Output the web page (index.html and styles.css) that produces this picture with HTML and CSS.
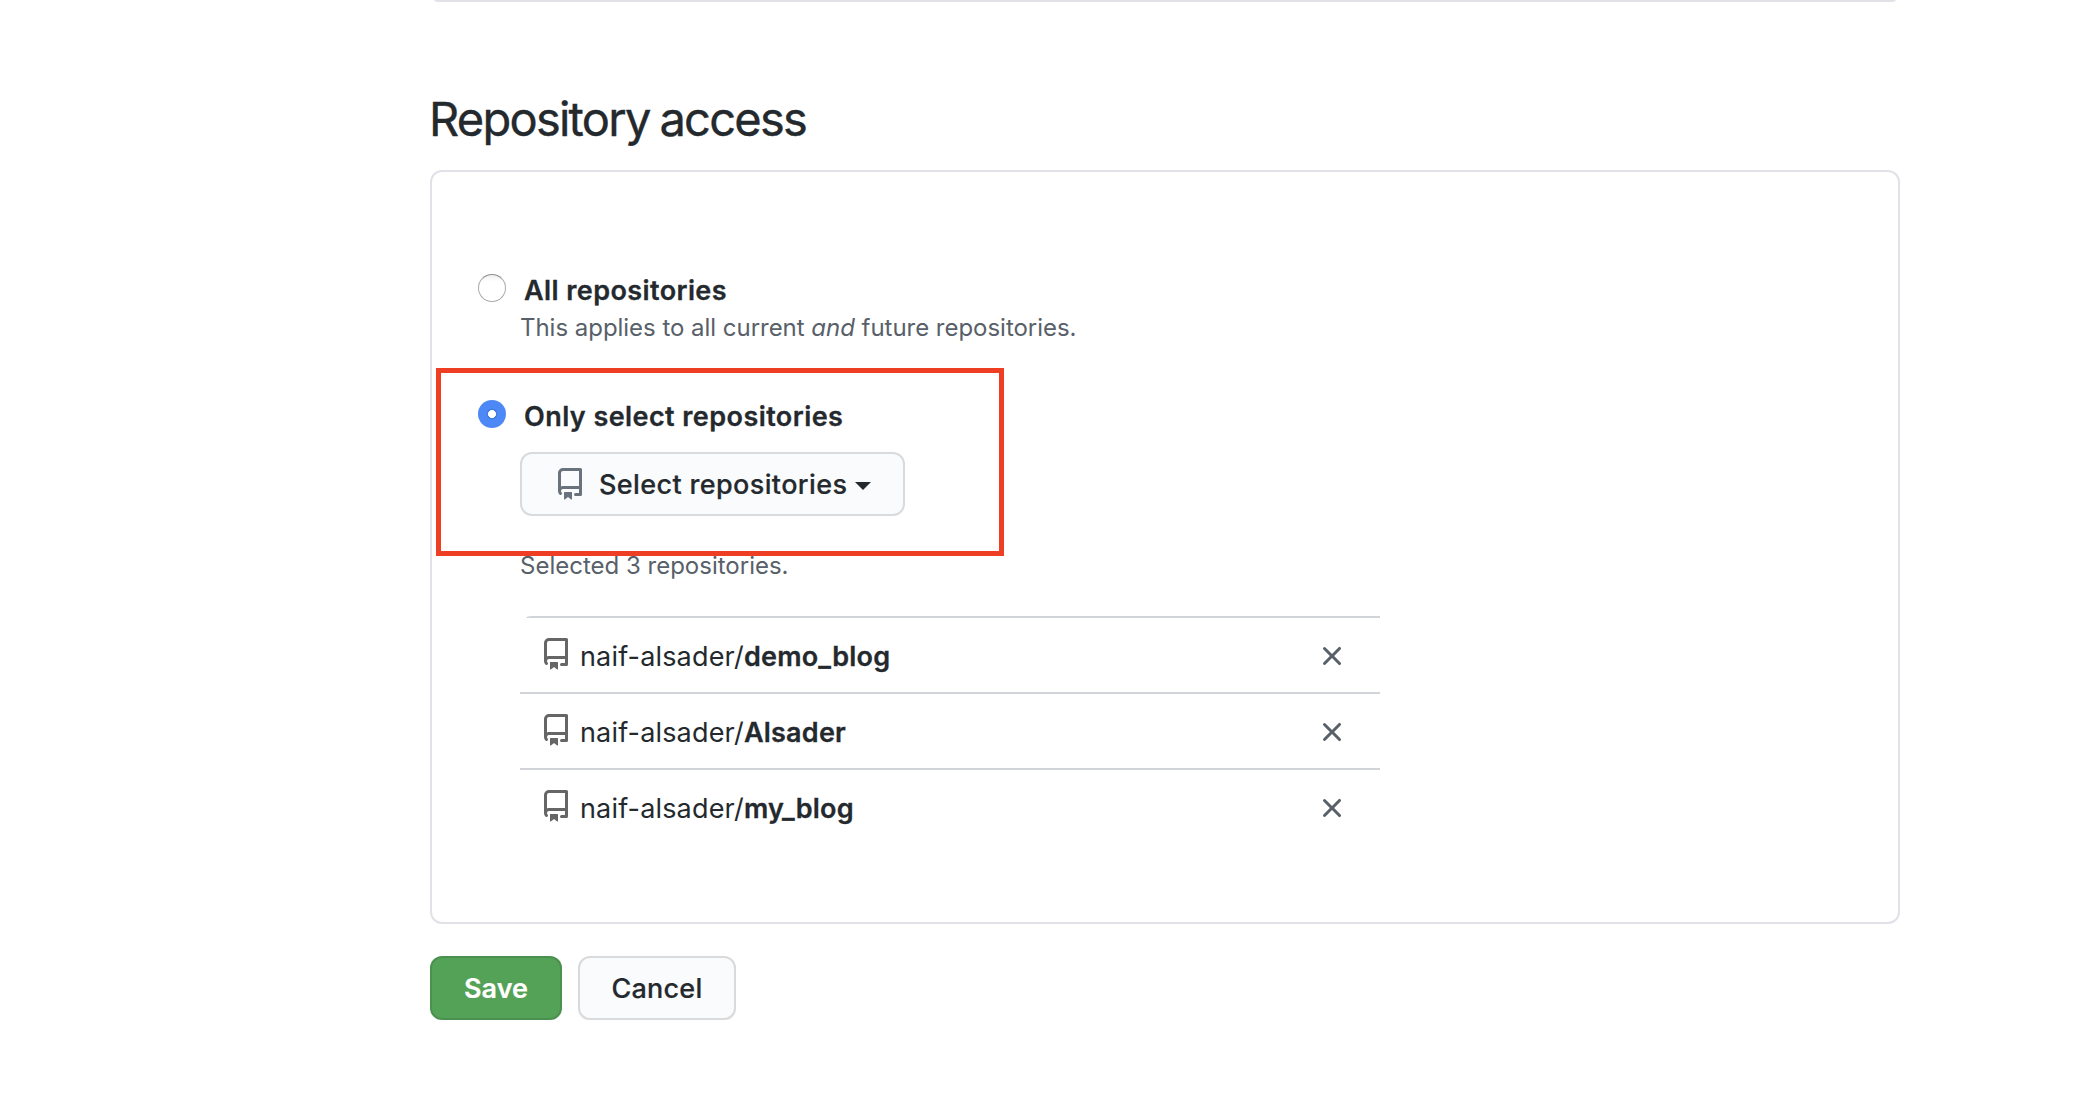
FILE: index.html
```html
<!DOCTYPE html>
<html lang="en">
<head>
<meta charset="utf-8">
<title>Repository access</title>
<link rel="stylesheet" href="styles.css">
</head>
<body>
<svg class="sprite" aria-hidden="true">
  <symbol id="repo" viewBox="0 0 16 16"><path fill-rule="evenodd" d="M2 2.5A2.5 2.5 0 014.5 0h8.75a.75.75 0 01.75.75v12.5a.75.75 0 01-.75.75h-2.5a.75.75 0 110-1.5h1.75v-2h-8a1 1 0 00-.714 1.7.75.75 0 01-1.072 1.05A2.495 2.495 0 012 11.5v-9zm10.5-1V9h-8c-.356 0-.694.074-1 .208V2.5a1 1 0 011-1h8zM5 12.25v3.25a.25.25 0 00.4.2l1.45-1.087a.25.25 0 01.3 0L8.6 15.7a.25.25 0 00.4-.2v-3.25a.25.25 0 00-.25-.25h-3.5a.25.25 0 00-.25.25z"/></symbol>
  <symbol id="x" viewBox="0 0 16 16"><path fill-rule="evenodd" d="M3.72 3.72a.75.75 0 011.06 0L8 6.94l3.22-3.22a.75.75 0 111.06 1.06L9.06 8l3.22 3.22a.75.75 0 11-1.06 1.06L8 9.06l-3.22 3.22a.75.75 0 01-1.06-1.06L6.94 8 3.72 4.78a.75.75 0 010-1.06z"/></symbol>
</svg>
<main class="container">
  <div class="previous-box"></div>
  <h2 class="title">Repository access</h2>
  <section class="box">
    <div class="highlight"></div>
    <label class="option"><span class="radio"></span>All repositories</label>
    <p class="note">This applies to all current <em>and</em> future repositories.</p>
    <label class="option option-select"><span class="radio radio-checked"></span>Only select repositories</label>
    <button class="btn btn-select"><svg class="icon"><use href="#repo"/></svg><span class="btn-text">Select repositories</span><span class="caret"></span></button>
    <p class="note note-selected">Selected 3 repositories.</p>
    <ul class="repos">
      <li class="repo"><svg class="icon repo-icon"><use href="#repo"/></svg><span class="name">naif-alsader/<b>demo_blog</b></span><svg class="icon remove"><use href="#x"/></svg></li>
      <li class="repo"><svg class="icon repo-icon"><use href="#repo"/></svg><span class="name">naif-alsader/<b>Alsader</b></span><svg class="icon remove"><use href="#x"/></svg></li>
      <li class="repo"><svg class="icon repo-icon"><use href="#repo"/></svg><span class="name">naif-alsader/<b>my_blog</b></span><svg class="icon remove"><use href="#x"/></svg></li>
    </ul>
  </section>
  <div class="actions">
    <button class="btn btn-primary">Save</button>
    <button class="btn btn-cancel">Cancel</button>
  </div>
</main>
</body>
</html>
```
FILE: styles.css
```css
* { box-sizing: border-box; }
body {
  margin: 0;
  background: #fff;
  color: #24292e;
  font-family: Inter, "Liberation Sans", sans-serif;
  font-size: 27px;
}
.sprite { display: none; }
.container { width: 1470px; margin-left: 430px; }
.previous-box {
  height: 2px;
  margin: 0 4px;
  background: #e1e1e8;
  border-radius: 0 0 6px 6px / 0 0 2px 2px;
}
.title {
  margin: 87px 0 21px -1px;
  font-size: 47px;
  font-weight: 400;
  line-height: 60px;
  letter-spacing: -1.75px;
  word-spacing: -1.6px;
  -webkit-text-stroke: 0.4px #24292e;
}
.box {
  position: relative;
  height: 754px;
  padding: 100px 46px 0;
  border: 2px solid #e1e1e8;
  border-radius: 12px;
}
.highlight {
  position: absolute;
  left: 4px;
  top: 196px;
  width: 568px;
  height: 188px;
  border: 5px solid #ee3f24;
  z-index: 1;
}
.option {
  display: flex;
  align-items: flex-start;
  gap: 18px;
  line-height: 38px;
  font-weight: 600;
  letter-spacing: 0.41px;
  -webkit-text-stroke: 0.3px #24292e;
}
.option-select { margin-top: 52px; letter-spacing: 0.43px; }
.radio {
  width: 28px;
  height: 28px;
  margin-top: 2px;
  border: 1px solid #aaa;
  border-top-color: #8f8f8f;
  border-radius: 50%;
  background: linear-gradient(#f0f0f0, #fff 25%);
}
.radio-checked {
  border: 0;
  background: radial-gradient(circle, #fff 3.7px, #3c78dc 4.3px, #4d89f6 6px);
}
.note {
  margin: 0 0 0 42px;
  color: #586069;
  font-size: 24px;
  line-height: 36px;
  letter-spacing: -0.03px;
}
.note-selected { margin-top: 32px; letter-spacing: 0; }
.icon { width: 32px; height: 32px; flex: none; fill: #6a737d; }
.btn {
  display: flex;
  align-items: center;
  justify-content: center;
  height: 64px;
  padding: 2px 0 0;
  border: 2px solid #d9dadc;
  border-radius: 12px;
  background: #fafbfc;
  box-shadow: 0 2px 0 rgba(27, 31, 35, 0.03);
  color: #24292e;
  font: 500 27px/58px Inter, "Liberation Sans", sans-serif;
  -webkit-text-stroke: 0.2px currentColor;
}
.btn-select {
  justify-content: flex-start;
  width: 385px;
  margin: 16px 0 0 42px;
  padding: 0 0 0 32px;
  box-shadow: none;
  letter-spacing: 0.37px;
}
.btn-text { margin-left: 13px; padding-top: 2px; }
.caret {
  margin: 4px 0 0 8px;
  border: 8px solid transparent;
  border-top-color: #24292e;
  border-bottom: 0;
}
.repos {
  width: 860px;
  margin: 32px 0 0 42px;
  padding: 0;
  list-style: none;
}
.repo {
  display: flex;
  height: 76px;
  padding: 0 32px 0 20px;
  border-top: 2px solid #d1d5da;
}
.repo:first-child {
  margin-left: 6px;
  padding-left: 14px;
  border-top-left-radius: 6px 2px;
}
.repo-icon { margin-top: 20px; fill: #666; }
.name {
  flex: 1;
  padding: 3px 0 0 8px;
  line-height: 72px;
  letter-spacing: 0.17px;
}
.name b { font-weight: 600; letter-spacing: 0.22px; -webkit-text-stroke: 0.3px #24292e; }
.remove { margin-top: 22px; fill: #586069; }
.actions { display: flex; gap: 16px; margin-top: 32px; }
.btn-primary {
  width: 132px;
  border-color: #4a9150;
  background: #54a257;
  color: #fff;
  font-weight: 600;
}
.btn-cancel { width: 158px; letter-spacing: 0.2px; }
```
